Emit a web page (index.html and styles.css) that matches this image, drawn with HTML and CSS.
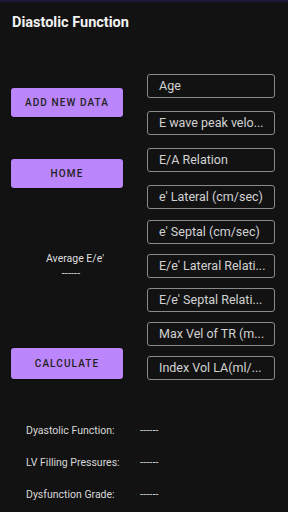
FILE: index.html
```html
<!DOCTYPE html>
<html>
<head>
<meta charset="utf-8">
<link rel="stylesheet" href="styles.css">
</head>
<body>
<div class="statusbar"></div>
<header class="appbar">Diastolic Function</header>
<main class="main">
  <div class="left">
    <button class="btn">ADD NEW DATA</button>
    <button class="btn btn-home">HOME</button>
    <div class="avg">
      <div class="avg-label">Average E/e'</div>
      <div class="avg-value">------</div>
    </div>
    <button class="btn btn-calc">CALCULATE</button>
  </div>
  <div class="right">
    <div class="field f2">Age</div>
    <div class="field f2">E wave peak velo...</div>
    <div class="field f2">E/A Relation</div>
    <div class="field f1">e' Lateral (cm/sec)</div>
    <div class="field">e' Septal (cm/sec)</div>
    <div class="field">E/e' Lateral Relati...</div>
    <div class="field">E/e' Septal Relati...</div>
    <div class="field">Max Vel of TR (m...</div>
    <div class="field">Index Vol LA(ml/...</div>
  </div>
</main>
<section class="results">
  <div class="row"><span class="label">Dyastolic Function:</span><span class="value">------</span></div>
  <div class="row"><span class="label">LV Filling Pressures:</span><span class="value">------</span></div>
  <div class="row"><span class="label">Dysfunction Grade:</span><span class="value">------</span></div>
</section>
</body>
</html>
```
FILE: styles.css
```css
html, body {
  margin: 0;
  padding: 0;
  background: #121212;
  font-family: Roboto, "Noto Sans", sans-serif;
  color: #e6e6e6;
  width: 288px;
  height: 512px;
  overflow: hidden;
}
.statusbar {
  height: 2px;
  background: #1e1a3c;
}
.appbar {
  height: 40px;
  padding: 12px 0 0 12px;
  box-sizing: border-box;
  font-size: 14.5px;
  line-height: 18px;
  font-weight: 700;
  color: #f2f2f2;
}
.main {
  margin-top: 32px;
  display: grid;
  grid-template-columns: 112px 128px;
  column-gap: 24px;
  padding-left: 11px;
}
.left {
  display: flex;
  flex-direction: column;
  align-items: stretch;
  padding-top: 14px;
}
.btn {
  height: 29px;
  border: none;
  border-radius: 3px;
  background: #bb86fc;
  color: #222222;
  font-family: Roboto, sans-serif;
  font-size: 10px;
  font-weight: 500;
  letter-spacing: 1.1px;
  padding: 0;
  box-shadow: 0 1px 2px rgba(0,0,0,0.5);
}
.btn-home {
  margin-top: 42px;
}
.avg {
  margin-top: 65px;
  display: flex;
  flex-direction: column;
  align-items: center;
  font-size: 10.5px;
  line-height: 12px;
  color: #dedede;
  padding-left: 16px;
}
.avg-value {
  margin-top: 3px;
  margin-right: 8px;
  font-size: 10.5px;
  letter-spacing: 0.2px;
}
.btn-calc {
  margin-top: 68px;
  height: 31px;
}
.right {
  display: flex;
  flex-direction: column;
  gap: 10px;
}
.field {
  height: 24px;
  box-sizing: border-box;
  border: 1px solid #8a8a8a;
  border-radius: 3px;
  padding-left: 11px;
  font-size: 12.5px;
  line-height: 22px;
  color: #d2d2d2;
  white-space: nowrap;
  overflow: hidden;
}
.f2 { margin-bottom: 3px; }
.f1 { margin-bottom: 1px; }
.results {
  margin-top: 45px;
  padding-left: 26px;
  display: flex;
  flex-direction: column;
  gap: 20px;
}
.row {
  display: grid;
  grid-template-columns: 114px auto;
  font-size: 10.5px;
  line-height: 12px;
  color: #d8d8d8;
}
.value {
  font-size: 10.5px;
  letter-spacing: 0.2px;
}
```
